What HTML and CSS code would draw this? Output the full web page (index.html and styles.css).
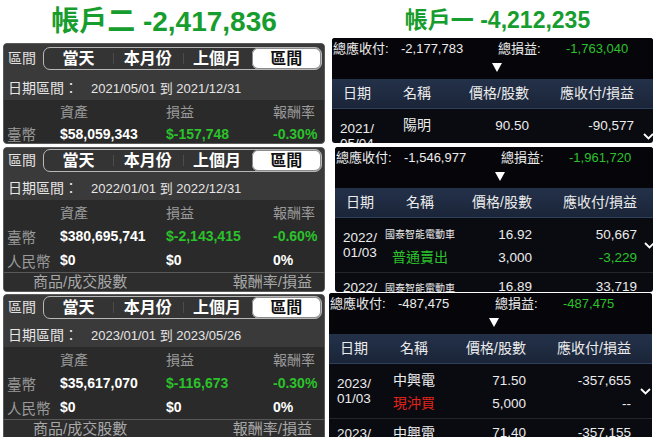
FILE: index.html
```html
<!DOCTYPE html>
<html lang="zh-Hant">
<head>
<meta charset="utf-8">
<link rel="stylesheet" href="styles.css">
</head>
<body>
<div class="page">
  <div class="col-left">
    <h1 class="title title-left">帳戶二 -2,417,836</h1>

    <section class="lp lp-1">
      <div class="lp-top">
        <div class="seg-row">
          <span class="seg-label">區間</span>
          <div class="seg">
            <span class="seg-item">當天</span>
            <span class="seg-item d">本月份</span>
            <span class="seg-item d">上個月</span>
            <span class="seg-item on">區間</span>
          </div>
        </div>
        <div class="date-row"><span class="date-label">日期區間：</span><span class="date-val">2021/05/01 到 2021/12/31</span></div>
      </div>
      <div class="srow shead"><span></span><span>資產</span><span>損益</span><span>報酬率</span></div>
      <div class="srow sval"><span class="slabel">臺幣</span><span>$58,059,343</span><span class="g">$-157,748</span><span class="g">-0.30%</span></div>
    </section>

    <section class="lp lp-2">
      <div class="lp-top">
        <div class="seg-row">
          <span class="seg-label">區間</span>
          <div class="seg">
            <span class="seg-item">當天</span>
            <span class="seg-item d">本月份</span>
            <span class="seg-item d">上個月</span>
            <span class="seg-item on">區間</span>
          </div>
        </div>
        <div class="date-row"><span class="date-label">日期區間：</span><span class="date-val">2022/01/01 到 2022/12/31</span></div>
      </div>
      <div class="srow shead"><span></span><span>資產</span><span>損益</span><span>報酬率</span></div>
      <div class="srow sval"><span class="slabel">臺幣</span><span>$380,695,741</span><span class="g">$-2,143,415</span><span class="g">-0.60%</span></div>
      <div class="srow sval"><span class="slabel">人民幣</span><span>$0</span><span>$0</span><span>0%</span></div>
      <div class="lfoot"><span>商品/成交股數</span><span>報酬率/損益</span></div>
    </section>

    <section class="lp lp-3">
      <div class="lp-top">
        <div class="seg-row">
          <span class="seg-label">區間</span>
          <div class="seg">
            <span class="seg-item">當天</span>
            <span class="seg-item d">本月份</span>
            <span class="seg-item d">上個月</span>
            <span class="seg-item on">區間</span>
          </div>
        </div>
        <div class="date-row"><span class="date-label">日期區間：</span><span class="date-val">2023/01/01 到 2023/05/26</span></div>
      </div>
      <div class="srow shead"><span></span><span>資產</span><span>損益</span><span>報酬率</span></div>
      <div class="srow sval"><span class="slabel">臺幣</span><span>$35,617,070</span><span class="g">$-116,673</span><span class="g">-0.30%</span></div>
      <div class="srow sval"><span class="slabel">人民幣</span><span>$0</span><span>$0</span><span>0%</span></div>
      <div class="lfoot"><span>商品/成交股數</span><span>報酬率/損益</span></div>
    </section>
  </div>

  <div class="col-right">
    <h1 class="title title-right">帳戶一 -4,212,235</h1>

    <section class="rp rp-1">
      <div class="sum"><span>總應收付:</span><span>-2,177,783</span><span>總損益:</span><span class="g">-1,763,040</span></div>
      <div class="tri-row"><svg class="tri" width="10" height="9" viewBox="0 0 10 9"><polygon points="0,0 10,0 5,9" fill="#fff"/></svg></div>
      <div class="tgrid thead"><span class="c-date">日期</span><span class="c-name">名稱</span><span class="c-price">價格/股數</span><span class="c-amt">應收付/損益</span></div>
      <div class="tgrid trow trow-cut">
        <div class="c-date"><div>2021/</div><div>05/04</div></div>
        <div class="c-name"><div>陽明</div></div>
        <div class="c-price"><div>90.50</div></div>
        <div class="c-amt"><div>-90,577</div></div>
        <svg class="chev" width="11" height="7" viewBox="0 0 11 7"><polyline points="1,1 5.5,5.5 10,1" fill="none" stroke="#fff" stroke-width="1.8"/></svg>
      </div>
    </section>

    <section class="rp rp-2">
      <div class="sum"><span>總應收付:</span><span>-1,546,977</span><span>總損益:</span><span class="g">-1,961,720</span></div>
      <div class="tri-row"><svg class="tri" width="10" height="9" viewBox="0 0 10 9"><polygon points="0,0 10,0 5,9" fill="#fff"/></svg></div>
      <div class="tgrid thead"><span class="c-date">日期</span><span class="c-name">名稱</span><span class="c-price">價格/股數</span><span class="c-amt">應收付/損益</span></div>
      <div class="tgrid trow">
        <div class="c-date"><div>2022/</div><div>01/03</div></div>
        <div class="c-name"><div class="small">國泰智能電動車</div><div class="g">普通賣出</div></div>
        <div class="c-price"><div>16.92</div><div>3,000</div></div>
        <div class="c-amt"><div>50,667</div><div class="g">-3,229</div></div>
        <svg class="chev chev-2" width="11" height="7" viewBox="0 0 11 7"><polyline points="1,1 5.5,5.5 10,1" fill="none" stroke="#fff" stroke-width="1.8"/></svg>
      </div>
      <div class="tgrid tpart">
        <div class="c-date">2022/</div>
        <div class="c-name"><span class="small">國泰智能電動車</span></div>
        <div class="c-price">16.89</div>
        <div class="c-amt">33,719</div>
      </div>
    </section>

    <section class="rp rp-3">
      <div class="sum"><span>總應收付:</span><span>-487,475</span><span>總損益:</span><span class="g">-487,475</span></div>
      <div class="tri-row"><svg class="tri" width="10" height="9" viewBox="0 0 10 9"><polygon points="0,0 10,0 5,9" fill="#fff"/></svg></div>
      <div class="tgrid thead"><span class="c-date">日期</span><span class="c-name">名稱</span><span class="c-price">價格/股數</span><span class="c-amt">應收付/損益</span></div>
      <div class="tgrid trow">
        <div class="c-date"><div>2023/</div><div>01/03</div></div>
        <div class="c-name"><div>中興電</div><div class="r">現沖買</div></div>
        <div class="c-price"><div>71.50</div><div>5,000</div></div>
        <div class="c-amt"><div>-357,655</div><div>--</div></div>
        <svg class="chev" width="11" height="7" viewBox="0 0 11 7"><polyline points="1,1 5.5,5.5 10,1" fill="none" stroke="#fff" stroke-width="1.8"/></svg>
      </div>
      <div class="tgrid tpart">
        <div class="c-date">2023/</div>
        <div class="c-name">中興電</div>
        <div class="c-price">71.40</div>
        <div class="c-amt">-357,155</div>
      </div>
    </section>
  </div>
</div>
</body>
</html>
```

FILE: styles.css
```css
* { box-sizing: border-box; margin: 0; padding: 0; }
html, body { width: 656px; height: 437px; overflow: hidden; background: #fff; }
body { font-family: "Liberation Sans", "Noto Sans CJK TC", sans-serif; }

.page { display: flex; height: 437px; }
.col-left { width: 322px; margin-left: 3px; flex: none; }
.col-right { width: 327px; margin-left: 4px; flex: none; }

.title { color: #179d2d; font-weight: 700; text-align: center; white-space: nowrap; }
.title-left { height: 43px; line-height: 44px; font-size: 28px; }
.title-right { height: 38px; line-height: 40px; font-size: 23px; padding-left: 10px; }

.g { color: #2bc22b; }
.r { color: #e2231a; }

/* left panels */
.lp { background: #2a2a2a; border: 1px solid #5a5a5a; border-radius: 4px; overflow: hidden; color: #fff; }
.lp-1 { height: 101px; margin-bottom: 3px; }
.lp-2 { height: 145px; margin-bottom: 2px; }
.lp-3 { height: 150px; }

.lp-top { background: #3a3a3a; }
.seg-row { display: flex; align-items: flex-start; height: 26px; padding-top: 1px; }
.lp-1 .seg-row { height: 30px; padding-top: 3px; }
.seg-label { padding-left: 4px; font-size: 14px; line-height: 23px; color: #e2e2e2; }
.seg { display: flex; width: 279px; height: 23px; margin-left: auto; margin-right: 2px; border: 1px solid #b8b8b8; border-radius: 7px; background: #343434; }
.seg-item { flex: 1; position: relative; text-align: center; font-size: 16px; font-weight: 700; line-height: 21px; color: #fff; }
.seg-item.d::before { content: ""; position: absolute; left: 0; top: 5px; bottom: 5px; width: 1px; background: #4c4c4c; }
.seg-item.on { background: #fff; color: #111; border-radius: 6px; box-shadow: inset 0 0 0 1px #8a8a8a; }

.date-row { display: flex; align-items: center; height: 26px; padding-left: 4px; color: #e6e6e6; }
.date-label { width: 83px; font-size: 14px; flex: none; }
.date-val { font-size: 13px; }

.srow { display: grid; grid-template-columns: 53px 106px 107px 1fr; padding-left: 3px; align-items: center; white-space: nowrap; }
.shead { height: 24px; font-size: 14px; color: #9a9a9a; }
.lp-1 .shead { height: 22px; }
.sval { height: 24px; font-size: 14px; font-weight: 700; }
.lp-1 .sval { height: 23px; }
.slabel { font-weight: 400; color: #9a9a9a; font-size: 14.5px; }

.lfoot { display: flex; justify-content: space-between; height: 20px; line-height: 18px; padding: 0 12px 0 29px; border-top: 1px solid #585858; background: #2d2d2d; font-size: 15px; color: #a8a8a8; }

/* right panels */
.rp { background: #0a0b11; border-radius: 3px; overflow: hidden; color: #ececec; position: relative; flex: none; }
.rp-1 { margin-left: 3px; width: 321px; height: 105px; margin-bottom: 4px; }
.rp-2 { margin-left: 6px; width: 318px; height: 145px; margin-bottom: 1px; }
.rp-3 { margin-left: 0; width: 323px; height: 150px; }

.sum { display: grid; grid-template-columns: 68px 97px 68px 1fr; padding-left: 1px; height: 20px; line-height: 21px; font-size: 13px; background: #06060a; white-space: nowrap; }
.tri-row { height: 21px; padding-left: 160px; padding-top: 5px; background: #06060a; }
.tri { display: block; }

.tgrid { display: grid; grid-template-columns: 50px 70px 77px 105px; white-space: nowrap; }
.thead { height: 30px; line-height: 29px; font-size: 14px; background: linear-gradient(#233149, #1b2539); border-bottom: 1px solid #2f405a; }
.c-date { text-align: center; }
.c-name { text-align: center; }
.c-price { text-align: right; }
.c-amt { text-align: right; }

.trow { position: relative; height: 55px; border-bottom: 1px solid #24262d; font-size: 13.5px; }
.trow > div { padding-top: 5px; line-height: 23px; }
.trow > .c-date { padding-top: 12px; line-height: 15px; }
.trow .c-name { font-size: 14px; }
.small { font-size: 10px; }
.trow-cut { height: 34px; border-bottom: 0; }

.tpart { height: 19px; font-size: 13.5px; overflow: hidden; }
.tpart > div { padding-top: 9px; line-height: 10px; }
.tpart .c-name { font-size: 14px; }
.tpart > .c-date { padding-top: 11px; line-height: 8px; }

.chev { position: absolute; left: 311px; top: 24px; }
.chev-2 { left: 309px; }
```
